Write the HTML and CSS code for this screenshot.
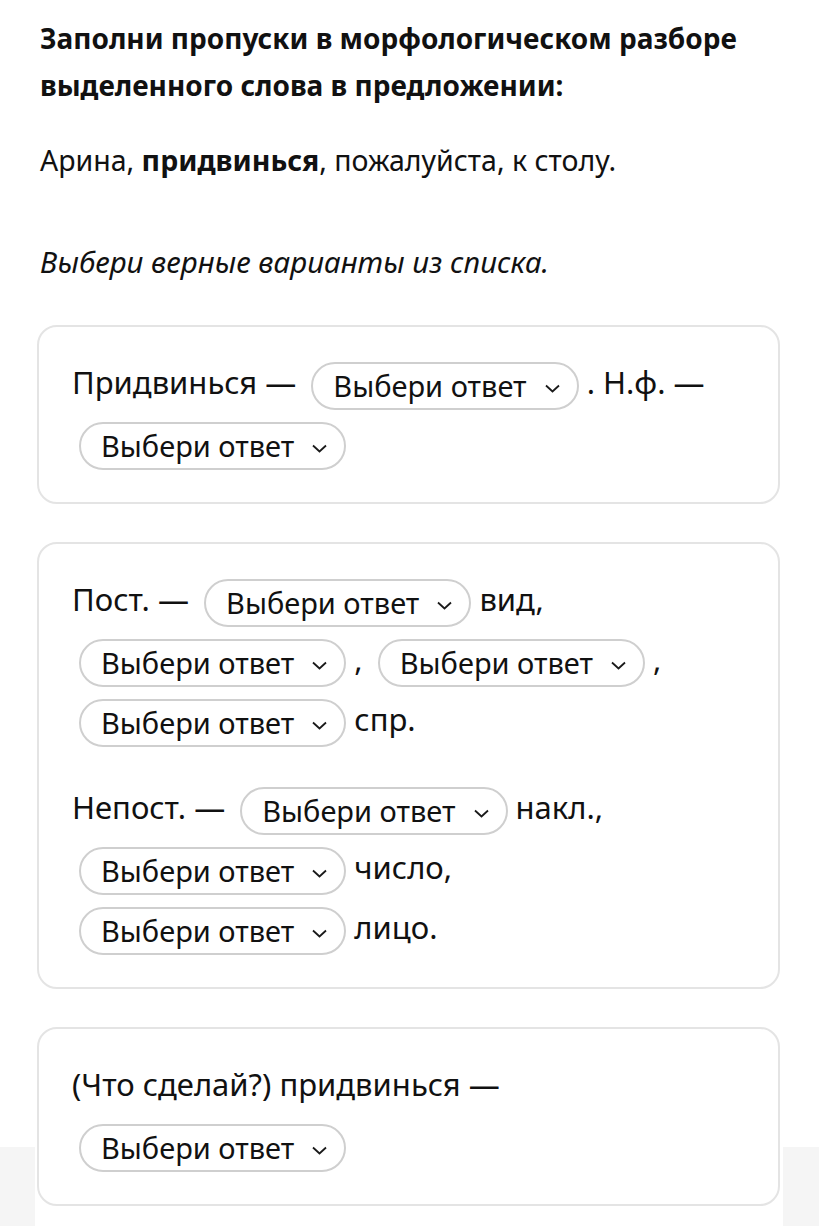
FILE: index.html
```html
<!DOCTYPE html>
<html>
<head>
  <meta charset="utf-8">
  <title>Морфологический разбор</title>
  <link rel="stylesheet" href="styles.css">
</head>
<body>
<div class="page">
  <h1 class="title">Заполни пропуски в морфологическом разборе выделенного слова в предложении:</h1>

  <p class="sentence">Арина, <b>придвинься</b>, пожалуйста, к столу.</p>

  <p class="hint">Выбери верные варианты из списка.</p>

  <div class="card">
    <p class="line">
      Придвинься —
      <span class="pick">Выбери ответ <svg class="chev" viewBox="0 0 15 9"><path d="M1 1.5 L7.5 7.5 L14 1.5"/></svg></span> . Н.ф. —
      <span class="pick">Выбери ответ <svg class="chev" viewBox="0 0 15 9"><path d="M1 1.5 L7.5 7.5 L14 1.5"/></svg></span>
    </p>
  </div>

  <div class="card">
    <p class="line">
      Пост. —
      <span class="pick">Выбери ответ <svg class="chev" viewBox="0 0 15 9"><path d="M1 1.5 L7.5 7.5 L14 1.5"/></svg></span> вид,
      <span class="pick">Выбери ответ <svg class="chev" viewBox="0 0 15 9"><path d="M1 1.5 L7.5 7.5 L14 1.5"/></svg></span> ,
      <span class="pick">Выбери ответ <svg class="chev" viewBox="0 0 15 9"><path d="M1 1.5 L7.5 7.5 L14 1.5"/></svg></span> ,
      <span class="pick">Выбери ответ <svg class="chev" viewBox="0 0 15 9"><path d="M1 1.5 L7.5 7.5 L14 1.5"/></svg></span> спр.
    </p>
    <p class="line">
      Непост. —
      <span class="pick">Выбери ответ <svg class="chev" viewBox="0 0 15 9"><path d="M1 1.5 L7.5 7.5 L14 1.5"/></svg></span> накл.,
      <span class="pick">Выбери ответ <svg class="chev" viewBox="0 0 15 9"><path d="M1 1.5 L7.5 7.5 L14 1.5"/></svg></span> число,
      <span class="pick">Выбери ответ <svg class="chev" viewBox="0 0 15 9"><path d="M1 1.5 L7.5 7.5 L14 1.5"/></svg></span> лицо.
    </p>
  </div>

  <div class="card">
    <p class="line">
      (Что сделай?) придвинься —
      <span class="pick">Выбери ответ <svg class="chev" viewBox="0 0 15 9"><path d="M1 1.5 L7.5 7.5 L14 1.5"/></svg></span>
    </p>
  </div>
</div>
</body>
</html>
```

FILE: styles.css
```css
html {
  background: linear-gradient(to bottom, #fff 1147px, #f5f5f5 1147px);
  min-height: 1226px;
}

body {
  margin: 0;
  font-family: "Noto Sans", "Open Sans", sans-serif;
  color: #111;
}

.page {
  width: 748px;
  margin-left: 35px;
  padding: 15px 3px 20px 2px;
  box-sizing: border-box;
  background: #fff;
  min-height: 1226px;
}

.title {
  margin: 0 0 31px 3px;
  font-size: 28px;
  line-height: 47px;
  font-weight: 700;
}

.sentence {
  margin: 0 0 62px 3px;
  font-size: 28.5px;
  line-height: 40px;
}

.hint {
  margin: 0 0 43px 3px;
  font-size: 29.5px;
  line-height: 40px;
  font-style: italic;
}

.card {
  border: 2px solid #e4e4e4;
  border-radius: 20px;
  padding: 25px 60px 30px 33px;
  margin-bottom: 38px;
}

.line {
  margin: 0;
  font-size: 31px;
  line-height: 60px;
}

.line + .line {
  margin-top: 28px;
}

.pick {
  display: inline-flex;
  align-items: center;
  gap: 18px;
  height: 48px;
  padding: 0 17px 0 20px;
  margin: 0 0 0 7px;
  border: 2px solid #cfcfcf;
  border-radius: 24px;
  box-sizing: border-box;
  font-size: 29px;
  vertical-align: middle;
  line-height: 1;
}

.chev {
  width: 15px;
  height: 9px;
  margin-top: 6px;
  fill: none;
  stroke: #1a1a1a;
  stroke-width: 1.8;
}
```
